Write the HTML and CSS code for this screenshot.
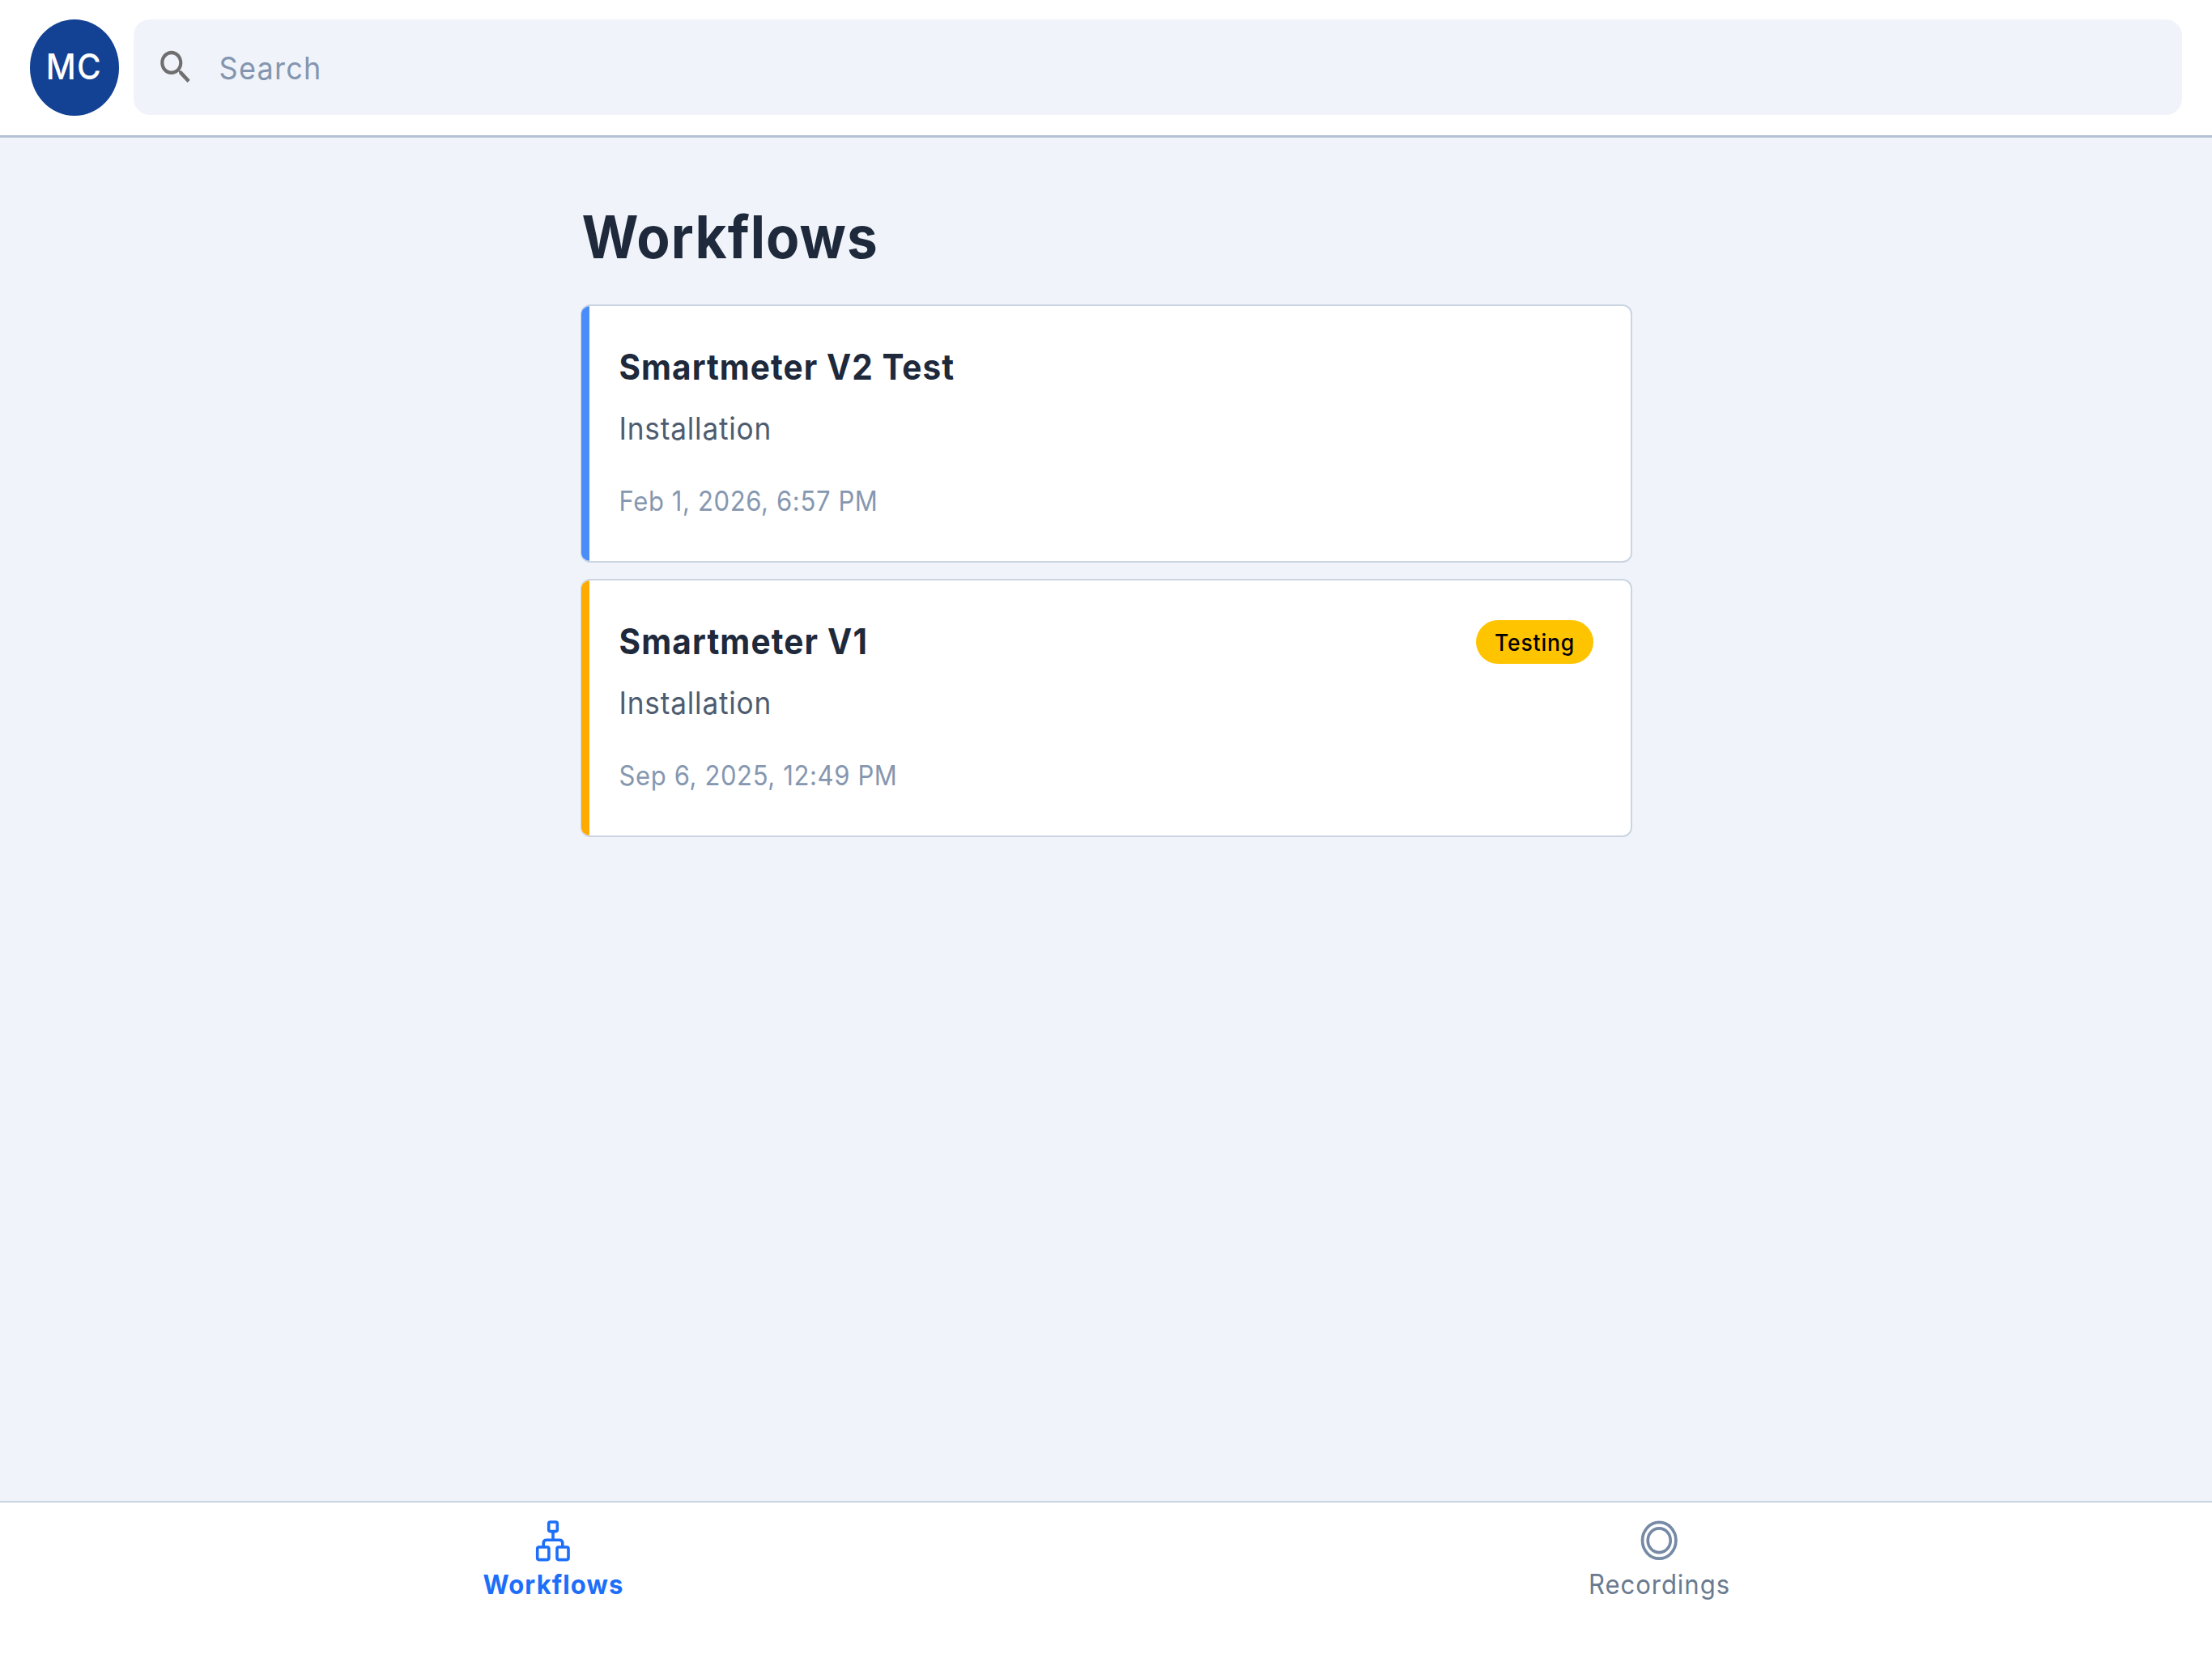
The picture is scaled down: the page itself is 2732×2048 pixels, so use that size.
FILE: index.html
```
<!DOCTYPE html>
<html lang="en">
<head>
<meta charset="utf-8">
<title>Workflows</title>
<link rel="stylesheet" href="styles.css">
</head>
<body>
<header class="topbar">
  <div class="avatar"><span class="tall avatar-text">MC</span></div>
  <div class="search">
    <svg class="search-icon" viewBox="0 0 24 24" preserveAspectRatio="none"><path fill="#6f6f6f" d="M15.5 14h-.79l-.28-.27C15.41 12.59 16 11.11 16 9.5 16 5.91 13.09 3 9.5 3S3 5.91 3 9.5 5.91 16 9.5 16c1.61 0 3.09-.59 4.23-1.57l.27.28v.79l5 4.99L20.49 19l-4.99-5zm-6 0C7.01 14 5 11.99 5 9.5S7.01 5 9.5 5 14 7.01 14 9.5 11.99 14 9.5 14z"/></svg>
    <span class="tall search-text">Search</span>
  </div>
</header>
<main class="content">
  <div class="column">
    <h1 class="tall heading">Workflows</h1>
    <article class="card card-blue">
      <div class="card-body">
        <div class="card-head"><h2 class="tall title">Smartmeter V2 Test</h2></div>
        <p class="tall subtitle">Installation</p>
        <p class="tall date">Feb 1, 2026, 6:57 PM</p>
      </div>
    </article>
    <article class="card card-amber">
      <div class="card-body">
        <div class="card-head"><h2 class="tall title title-short">Smartmeter V1</h2><span class="pill"><span class="tall pill-text">Testing</span></span></div>
        <p class="tall subtitle">Installation</p>
        <p class="tall date">Sep 6, 2025, 12:49 PM</p>
      </div>
    </article>
  </div>
</main>
<nav class="tabs">
  <a class="tab tab-active">
    <svg class="tab-icon" viewBox="0 0 54 54" fill="none" stroke="currentColor" stroke-width="3.6">
      <rect x="18.7" y="4" width="10.6" height="11.6" rx="2"/>
      <path d="M24 15.6v10.7M12.2 35v-4.7q0-4 4-4h15.6q4 0 4 4V35"/>
      <rect x="4.7" y="35" width="14.2" height="15.6" rx="2"/>
      <rect x="29" y="35" width="14" height="15.6" rx="2"/>
    </svg>
    <span class="tall tab-text">Workflows</span>
  </a>
  <a class="tab">
    <svg class="tab-icon" viewBox="0 0 54 54" fill="none" stroke="#768aa5" stroke-width="3.7">
      <ellipse cx="24.2" cy="26.8" rx="20.7" ry="22.4"/>
      <ellipse cx="24.2" cy="26.8" rx="14" ry="14.9"/>
    </svg>
    <span class="tall tab-text tab-text-idle">Recordings</span>
  </a>
</nav>
</body>
</html>
```
FILE: styles.css
```
* { box-sizing: border-box; margin: 0; }

body {
  display: flex;
  flex-direction: column;
  height: 2048px;
  background: #f0f4fa;
  font-family: Inter, "Liberation Sans", sans-serif;
  color: #1e293b;
}

/* Type is drawn slightly taller than its natural proportions. */
.tall {
  display: block;
  white-space: nowrap;
  transform: scaleY(1.074);
  font-variant-ligatures: none;
}

.topbar {
  display: flex;
  gap: 18.5px;
  height: 170px;
  padding: 24px 37px 0 36.5px;
  background: #fff;
  border-bottom: 3px solid #b3c0d3;
}

.avatar {
  display: flex;
  align-items: center;
  justify-content: center;
  width: 110px;
  height: 118.5px;
  border-radius: 50%;
  background: #134194;
  color: #fff;
}

.avatar-text {
  font-size: 40.5px;
  line-height: 44px;
  font-weight: 500;
  letter-spacing: 1.5px;
}

.search {
  display: flex;
  align-items: center;
  flex: 1;
  height: 118px;
  padding-left: 27px;
  border-radius: 20px;
  background: #f0f4fa;
}

.search-icon { width: 50px; height: 54px; }

.search-text {
  margin: 1px 0 0 28.5px;
  color: #8496af;
  font-size: 36px;
  line-height: 46px;
  letter-spacing: 1.29px;
}

.content { flex: 1; padding-top: 81px; }

.column { width: 1299px; margin-left: 717px; }

.heading {
  padding-left: 1.5px;
  margin-bottom: 41px;
  font-size: 67.5px;
  line-height: 84px;
  font-weight: 700;
  letter-spacing: 1.1px;
}

.card {
  display: flex;
  height: 319px;
  margin-bottom: 20px;
  overflow: hidden;
  background: #fff;
  border: 2px solid #cbd5e1;
  border-left-width: 1px;
  border-radius: 12px;
}

.card::before { content: ""; width: 10px; }
.card-blue::before { background: #4b8df8; }
.card-amber::before { background: #ffaa00; }

.card-body { flex: 1; padding: 49px 46px 0 36.5px; }

.card-head {
  display: flex;
  align-items: center;
  justify-content: space-between;
  height: 54px;
}

.title {
  font-size: 40.5px;
  line-height: 54px;
  font-weight: 700;
  letter-spacing: 1.05px;
}

.title-short { letter-spacing: 1.15px; }

.subtitle {
  margin-top: 25px;
  color: #4e5c70;
  font-size: 35.2px;
  line-height: 46px;
  letter-spacing: 0.8px;
}

.date {
  margin-top: 47px;
  color: #8697b0;
  font-size: 31px;
  line-height: 40px;
  letter-spacing: 0.63px;
}

.pill {
  display: flex;
  align-items: center;
  justify-content: center;
  width: 145px;
  height: 54px;
  border-radius: 27px;
  background: #ffc400;
  color: #000;
}

.pill-text {
  margin-bottom: 1px;
  font-size: 26.5px;
  line-height: 36px;
  font-weight: 500;
  letter-spacing: 0.85px;
}

.tabs {
  display: flex;
  height: 194px;
  background: #fff;
  border-top: 2px solid #cbd5e1;
}

.tab {
  display: flex;
  flex-direction: column;
  align-items: center;
  flex: 1;
  padding-top: 20px;
  color: #6a7a90;
}

.tab-active { color: #1d6ef9; }

.tab-icon { width: 54px; height: 54px; margin-left: 6px; }

.tab-text {
  margin: 7px 0 0 1px;
  font-size: 31px;
  line-height: 40px;
  font-weight: 700;
  letter-spacing: 1.15px;
}

.tab-text-idle { font-weight: 400; letter-spacing: 0.98px; }
```
